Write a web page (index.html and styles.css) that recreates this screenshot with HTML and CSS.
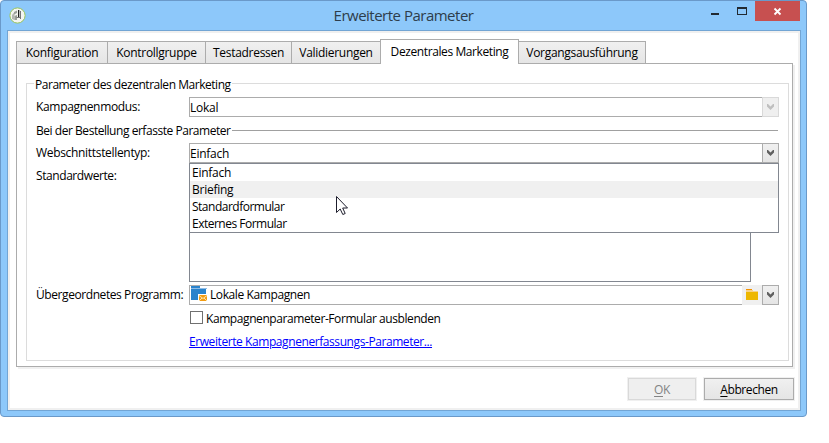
FILE: index.html
```html
<!DOCTYPE html>
<html lang="de">
<head>
<meta charset="utf-8">
<title>Erweiterte Parameter</title>
<link rel="stylesheet" href="styles.css">
</head>
<body>
<div class="window">
  <header class="titlebar">
    <svg class="app-icon" width="17" height="17" viewBox="0 0 17 17">
      <circle cx="8.500" cy="8.500" r="7.600" fill="#f4f5f1" stroke="#9cc65a"/>
      <path d="M3 8l2.500-3v8L3 12z" fill="#b4b7b1"/>
      <path d="M5 5l3-1.500V6L5 7.500zM5.500 9L8 8v5H5.500z" fill="#9b9f99"/>
      <path d="M11.500 4v8M7.500 10.500h4" fill="none" stroke="#777"/>
      <path d="M9 3h1.300v7H9z" fill="#222"/>
    </svg>
    <h1 class="title">Erweiterte Parameter</h1>
    <div class="controls">
      <svg width="92" height="20" viewBox="0 0 92 20" shape-rendering="crispEdges">
        <path d="M3 12h8v2H3z" fill="#222a31"/>
        <path d="M29 6h10v8H29zM30 8v5h8V8z" fill="#222a31" fill-rule="evenodd"/>
        <path d="M47 0h45v20H47z" fill="#c75050"/>
        <path d="M66.500 7.500l6 6m0-6l-6 6" stroke="#fff" stroke-width="1.8" shape-rendering="auto"/>
      </svg>
    </div>
  </header>
  <main class="client">
    <nav class="tabs">
      <div class="tab t1"><span>Konfiguration</span></div>
      <div class="tab t2"><span>Kontrollgruppe</span></div>
      <div class="tab t3"><span>Testadressen</span></div>
      <div class="tab t4"><span>Validierungen</span></div>
      <div class="tab t5 active"><span>Dezentrales Marketing</span></div>
      <div class="tab t6"><span>Vorgangsausführung</span></div>
    </nav>
    <section class="panel">
      <div class="group">
        <div class="legend"><span>Parameter des dezentralen Marketing</span></div>
        <div class="row mode">
          <label>Kampagnenmodus:</label>
          <div class="combo disabled"><span class="value">Lokal</span><div class="arrow"><svg width="7" height="6" viewBox="0 0 7 6"><path d="M0 0h1l2.500 2.500L6 0h1v2.500L3.500 6 0 2.500z"/></svg></div></div>
        </div>
        <div class="section"><span>Bei der Bestellung erfasste Parameter</span><i></i></div>
        <div class="row type">
          <label>Webschnittstellentyp:</label>
          <div class="combo"><span class="value">Einfach</span><div class="arrow"><svg width="7" height="6" viewBox="0 0 7 6"><path d="M0 0h1l2.500 2.500L6 0h1v2.500L3.500 6 0 2.500z"/></svg></div>
            <ul class="menu">
              <li>Einfach</li>
              <li class="hover">Briefing</li>
              <li>Standardformular</li>
              <li>Externes Formular</li>
            </ul>
            <svg class="cursor" width="13" height="20" viewBox="0 0 13 20"><path d="M.5.5v16l3.700-3.500 2.600 5.500 2.400-1-2.500-5.500h4.800z" fill="#fff" stroke="#1d1d2c"/></svg>
          </div>
        </div>
        <div class="row defaults">
          <label>Standardwerte:</label>
          <div class="listbox"></div>
        </div>
        <div class="row program">
          <label>Übergeordnetes Programm:</label>
          <div class="combo">
            <svg class="folder" width="17" height="16" viewBox="0 0 17 16">
              <path d="M0 0h9v2H0z" fill="#2a83cc"/><path d="M0 2h16v1H0z" fill="#8fbde8"/><path d="M0 3h15v11H0z" fill="#2a83cc"/>
              <path d="M7 8h10v8H7z" fill="#fff"/><path d="M8 9h8v6H8z" fill="#f39c12"/><path d="M8 9.500l4 3 4-3M8 15l3-3m5 3l-3-3" fill="none" stroke="#fff2cf" stroke-width=".8"/>
            </svg>
            <span class="value">Lokale Kampagnen</span>
            <div class="browse"><svg width="13" height="12" viewBox="0 0 13 12"><path d="M0 1h7v1h5v1H0z" fill="#f8d285"/><path d="M0 0h6v1H0z" fill="#f39200"/><path d="M0 3h12v8H0z" fill="#edb700"/></svg></div>
            <div class="arrow"><svg width="7" height="6" viewBox="0 0 7 6"><path d="M0 0h1l2.500 2.500L6 0h1v2.500L3.500 6 0 2.500z"/></svg></div>
          </div>
        </div>
        <div class="check"><b></b><span>Kampagnenparameter-Formular ausblenden</span></div>
        <a class="link">Erweiterte Kampagnenerfassungs-Parameter...</a>
      </div>
    </section>
    <footer class="buttons">
      <div class="btn ok"><span><u>O</u>K</span></div>
      <div class="btn cancel"><span><u>A</u>bbrechen</span></div>
    </footer>
  </main>
</div>
</body>
</html>
```

FILE: styles.css
```css
* { box-sizing: border-box; }
body {
  margin: 0;
  background: #fff;
  color: #000;
  font: 12px/17px "Open Sans", "Noto Sans", sans-serif;
  letter-spacing: -0.42px;
  white-space: nowrap;
}
.window {
  width: 807px;
  height: 417px;
  padding: 0 6px 6px;
  border: 1px solid #6a99c9;
  border-radius: 4px;
  background: #8dc8fa;
}
.titlebar { height: 29px; display: grid; grid-template-columns: 93px 1fr 93px; }
.app-icon { margin: 6px 0 0 2px; }
.title {
  margin: 3px 0 0;
  text-align: center;
  font-size: 15px;
  line-height: 22px;
  font-weight: 400;
  letter-spacing: -0.5px;
  color: #2d3d4b;
}
.controls svg { display: block; margin-left: 1px; }
.client {
  width: 794px;
  height: 381px;
  border: 1px solid #72a5d4;
  box-shadow: inset 0 0 0 2px #f0f0f0;
  background: #fff;
  padding: 8px 6px 0 8px;
}
.tabs { display: flex; align-items: flex-end; height: 25px; letter-spacing: -0.3px; }
.tab {
  height: 23px;
  border: 1px solid #acacac;
  border-right-width: 0;
  background: linear-gradient(#f0f0f0, #e5e5e5);
  display: flex;
  justify-content: center;
  line-height: 21px;
}
.t1 { width: 91px; }
.t2 { width: 98px; }
.t3 { width: 86px; }
.t4 { width: 89px; }
.t5 { width: 139px; letter-spacing: -0.4px; }
.t6 { width: 127px; border-width: 1px 1px 1px 0; }
.tab.active {
  height: 25px;
  border-width: 1px 1px 0;
  background: #fff;
  line-height: 24px;
}
.panel {
  width: 777px;
  height: 304px;
  margin-top: -1px;
  padding: 20px 3px 0 9px;
  border: 1px solid #acacac;
  border-top: 0;
  box-shadow: 2px 2px 0 #f0f0f0;
  background: linear-gradient(#acacac, #acacac) 629px 0 / 147px 1px no-repeat;
}
/* line under the tab strip, open beneath the active tab */
.tabs { position: relative; z-index: 1; }
.group { height: 278px; border: 1px solid #dcdcdc; padding-left: 9px; }
.legend { height: 13px; display: flex; }
.legend span { margin: -8px 0 0 -2px; padding: 0 1px; background: #fff; height: 17px; letter-spacing: -0.46px; }
.row { display: flex; }
.row label { width: 153px; }
.mode { height: 20px; }
.mode label { letter-spacing: -0.33px; }
.mode label, .type label, .program label { margin-top: 1px; }
.type label { letter-spacing: -0.32px; }
.combo {
  position: relative;
  width: 590px;
  height: 20px;
  border: 1px solid #acacac;
  display: flex;
  line-height: 19px;
}
.value { flex: 1; letter-spacing: -0.25px; }
.arrow {
  width: 17px;
  height: 20px;
  margin: -1px -1px 0 0;
  border: 1px solid #acacac;
  background: linear-gradient(#f0f0f0, #e5e5e5);
  padding: 6px 0 0 4px;
}
.arrow svg { display: block; fill: #606060; }
.disabled .arrow { border-color: #d9d9d9; background: #efefef; }
.disabled .arrow svg { fill: #bfbfbf; }
.section { width: 742px; height: 26px; display: flex; align-items: center; letter-spacing: -0.46px; }
.section i { flex: 0 0 auto; width: 546px; height: 1px; background: #a0a0a0; margin-left: auto; }
.type { height: 20px; }
.menu {
  position: absolute;
  z-index: 2;
  left: -1px;
  top: 19px;
  width: 590px;
  height: 70px;
  margin: 0;
  padding: 0;
  list-style: none;
  border: 1px solid #828790;
  background: #fff;
}
.menu li { height: 17px; line-height: 17px; padding-left: 2px; }
.menu li:first-child, .menu .hover { letter-spacing: -0.25px; }
.menu .hover { background: #f0f0f0; }
.menu li:nth-child(n+3) { letter-spacing: -0.5px; }
.cursor { position: absolute; z-index: 3; left: 146px; top: 52px; }
.defaults { height: 122px; }
.defaults label { margin-top: 4px; }
.listbox { width: 562px; height: 119px; border: 1px solid #828790; }
.program { height: 20px; }
.program .combo { line-height: 17px; }
.program .value { letter-spacing: -0.4px; }
.folder { margin: 0 2px 0 1px; }
.browse { width: 20px; height: 20px; margin-top: -1px; padding: 4px 0 0 4px; background: #f0f0f0; }
.browse svg { display: block; }
.check { height: 26px; display: flex; padding: 6px 0 0 154px; }
.check b { width: 13px; height: 13px; border: 1px solid #707070; margin-right: 3px; }
.check span { margin-top: -1px; }
.link { display: inline-block; margin: 2px 0 0 153px; color: #00f; text-decoration: underline; }
.buttons { display: flex; justify-content: flex-end; gap: 8px; margin-top: 11px; }
.btn {
  height: 22px;
  border: 1px solid #acacac;
  box-shadow: 0 0 0 1px #f0f0f0;
  background: linear-gradient(#f0f0f0, #e5e5e5);
  display: flex;
  justify-content: center;
  line-height: 21px;
}
.ok { width: 68px; border-color: #d9d9d9; background: #efefef; color: #838383; }
.cancel { width: 90px; }
u { text-underline-offset: 2px; }
```
